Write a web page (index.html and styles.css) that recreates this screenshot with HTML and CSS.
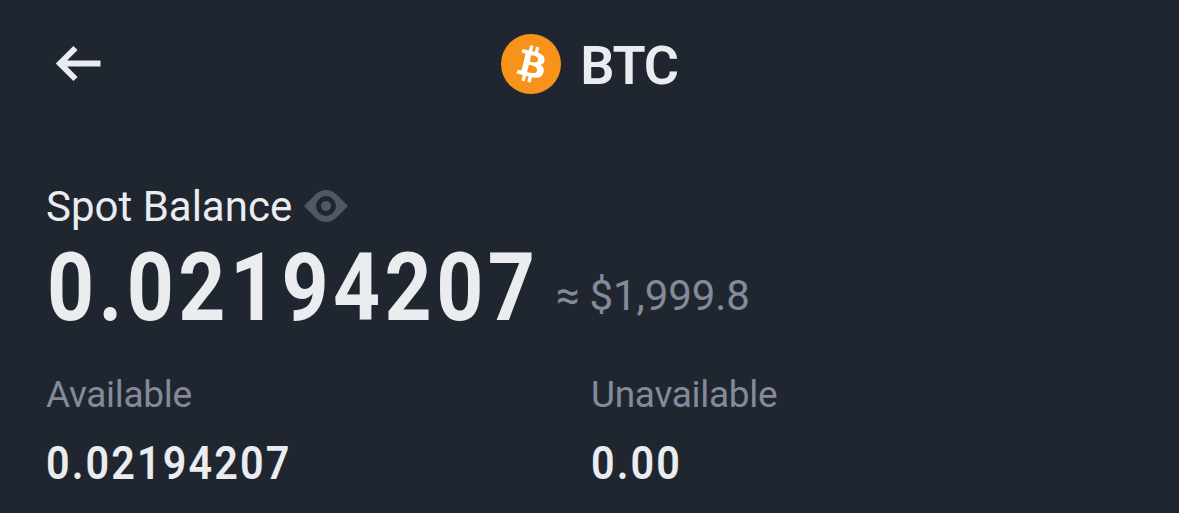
FILE: index.html
```html
<!DOCTYPE html>
<html lang="en">
<head>
    <meta charset="UTF-8">
    <meta name="viewport" content="width=device-width, initial-scale=1.0">
    <title>BTC - Spot Balance</title>
    <link rel="stylesheet" href="styles.css">
</head>
<body>
    <header class="header">
        <button class="back-btn" aria-label="Back">
            <svg width="46" height="38" viewBox="0 0 46 38" fill="none" stroke="currentColor" stroke-width="6">
                <path d="M20.500 3 5 18.500 20.500 34M5.500 18.500h40"/>
            </svg>
        </button>
        <div class="coin">
            <svg class="coin-icon" viewBox="0 0 32 32">
                <circle cx="16" cy="16" r="16" fill="#f7931a"/>
                <path fill="#fff" d="M23.189 14.02c.314-2.096-1.283-3.223-3.465-3.975l.708-2.84-1.728-.43-.69 2.765c-.454-.114-.92-.22-1.385-.326l.695-2.783L15.596 6l-.708 2.839c-.376-.086-.746-.17-1.104-.26l.002-.009-2.384-.595-.46 1.846s1.283.294 1.256.312c.7.175.826.638.805 1.006l-.806 3.235c.048.012.11.03.18.057l-.183-.045-1.13 4.532c-.086.212-.303.531-.793.41.018.025-1.256-.313-1.256-.313l-.858 1.978 2.25.561c.418.105.828.215 1.231.318l-.715 2.872 1.727.43.708-2.84c.472.127.93.245 1.378.357l-.706 2.828 1.728.43.715-2.866c2.948.558 5.164.333 6.097-2.333.752-2.146-.037-3.385-1.588-4.192 1.13-.26 1.98-1.003 2.207-2.538zm-3.95 5.538c-.533 2.147-4.148.986-5.32.695l.95-3.805c1.172.293 4.929.872 4.37 3.11zm.535-5.569c-.487 1.953-3.495.96-4.47.717l.86-3.45c.975.243 4.118.696 3.61 2.733z"/>
            </svg>
            <h1>BTC</h1>
        </div>
    </header>

    <main class="balance">
        <div class="balance-label">
            <span>Spot Balance</span>
            <svg class="eye-icon" viewBox="0 0 44 32">
                <path fill="currentColor" fill-rule="evenodd" d="M0 16 12 4C18-1.300 26-1.300 32 4L44 16 32 28C26 33.300 18 33.300 12 28ZM22 6a10 10 0 1 0 0 20 10 10 0 0 0 0-20Z"/>
                <circle cx="22" cy="16" r="5" fill="currentColor"/>
            </svg>
        </div>
        <div class="balance-total">
            <span class="amount">0.02194207</span>
            <span class="fiat"><span class="approx">≈</span>$1,999.8</span>
        </div>

        <div class="details">
            <div class="detail">
                <h2>Available</h2>
                <p>0.02194207</p>
            </div>
            <div class="detail">
                <h2>Unavailable</h2>
                <p>0.00</p>
            </div>
        </div>
    </main>
</body>
</html>
```
FILE: styles.css
```css
:root {
    --bg-color: #202630;
    --text-color: #eaecef;
    --muted-color: #848a99;
    --icon-color: #4f5867;
}

body {
    font-family: Roboto, "Liberation Sans", sans-serif;
    margin: 0;
    background-color: var(--bg-color);
    color: var(--text-color);
    overflow: hidden;
}

h1, h2, p {
    margin: 0;
}

.header {
    display: grid;
    grid-template-columns: 1fr auto 1fr;
    align-items: center;
    height: 128px;
    padding: 0 55px;
}

.back-btn {
    display: flex;
    justify-self: start;
    padding: 0;
    border: none;
    background: none;
    color: inherit;
    cursor: pointer;
}

.coin {
    display: flex;
    align-items: center;
    gap: 19px;
}

.coin-icon {
    width: 60px;
    height: 60px;
}

h1 {
    padding-top: 3px;
    font-size: 54px;
    font-weight: 600;
    line-height: 60px;
    letter-spacing: -1.3px;
}

.balance {
    padding: 55px 46px 0;
}

.balance-label {
    display: flex;
    align-items: center;
    gap: 12px;
    height: 46px;
    font-size: 42px;
}

.eye-icon {
    width: 44px;
    height: 32px;
    color: var(--icon-color);
}

.balance-total {
    display: flex;
    align-items: center;
    height: 111px;
}

/* condensed digits, the box keeps the drawn width */
.amount {
    width: 509px;
    margin-left: 1px;
    padding-top: 6px;
    font-size: 95px;
    font-weight: 700;
    line-height: 110px;
    letter-spacing: 5.1px;
    transform: scaleX(0.865);
    transform-origin: left;
}

.fiat {
    padding-top: 22px;
    color: var(--muted-color);
    font-size: 42px;
    line-height: 50px;
    letter-spacing: -0.1px;
}

.approx {
    margin-right: 10px;
}

.details {
    display: grid;
    grid-template-columns: 545px 1fr;
    margin-top: 32px;
}

.detail h2 {
    color: var(--muted-color);
    font-size: 37px;
    font-weight: 400;
    line-height: 46px;
    letter-spacing: -0.3px;
}

.detail p {
    margin-top: 20px;
    font-size: 47px;
    font-weight: 600;
    line-height: 50px;
    letter-spacing: 2.4px;
    transform: scaleX(0.88);
    transform-origin: left;
}
```
